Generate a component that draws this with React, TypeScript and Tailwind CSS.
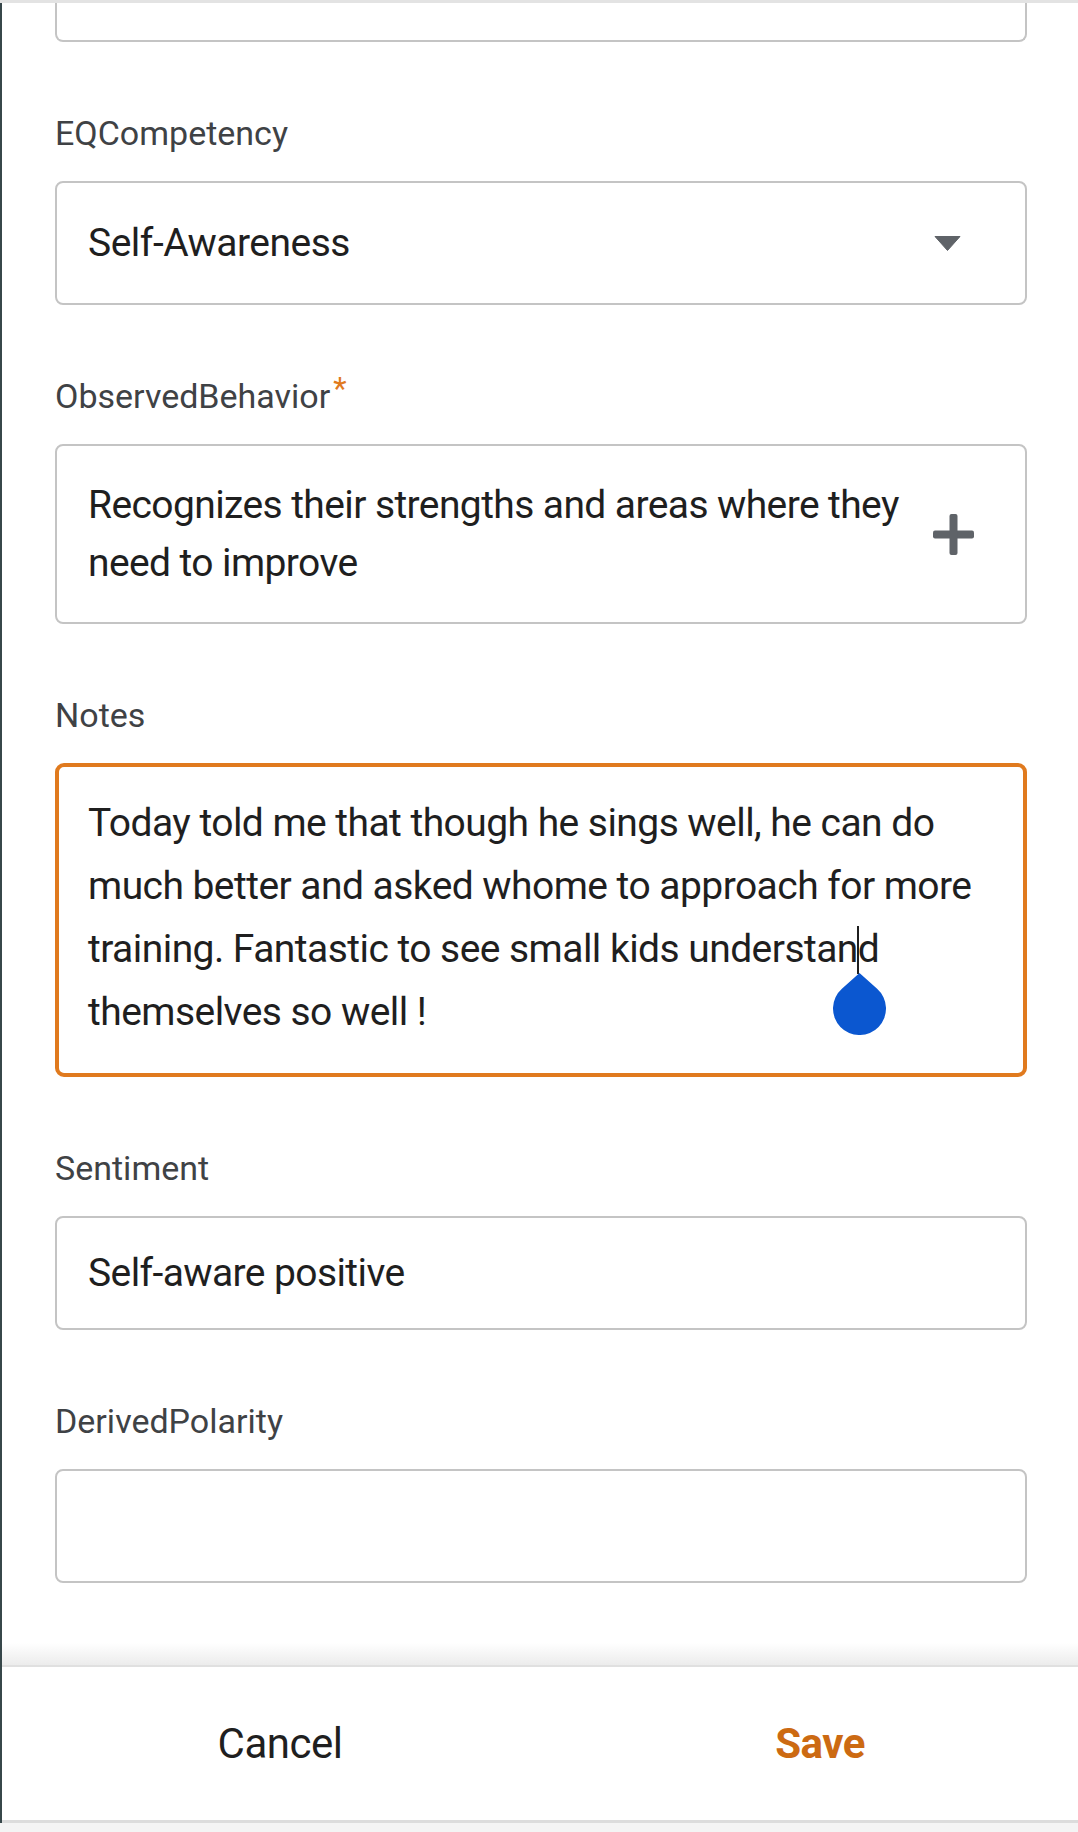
import React from "react";

function Label({ children, required }: { children: React.ReactNode; required?: boolean }) {
  return (
    <div className="mt-[71px] h-[40px] text-[34px] leading-[40px] text-[#3f4245] whitespace-nowrap flex items-start">
      <span>{children}</span>
      {required && (
        <span className="text-[#e07a1e] text-[31px] leading-[30px] ml-[3px] mt-[-2px]">*</span>
      )}
    </div>
  );
}

export default function App() {
  return (
    <div className="w-[1078px] h-[1832px] bg-white flex flex-col overflow-hidden font-['Roboto','Noto_Sans',sans-serif]">
      <div className="h-[3px] bg-[#e3e3e3] shrink-0" />
      <div className="flex-1 flex flex-col border-l-2 border-[#37474a] min-h-0">
        <div className="pl-[53px] pr-[51px] flex flex-col">
          {/* cut-off top box */}
          <div className="h-[39px] border-2 border-t-0 border-[#c4c4c4] rounded-b-[8px]" />

          <Label>EQCompetency</Label>
          <div className="mt-[28px] h-[124px] border-2 border-[#c4c4c4] rounded-[8px] flex items-center pl-[31px] pr-[64px]">
            <span className="flex-1 text-[39px] tracking-[-0.5px] text-[#1f1f1f]">Self-Awareness</span>
            <svg width="27" height="15" viewBox="0 0 27 15">
              <path d="M1 0.5 H26 L13.5 14.5 Z" fill="#5f6368" stroke="#5f6368" strokeWidth="1" strokeLinejoin="round" />
            </svg>
          </div>

          <Label required>ObservedBehavior</Label>
          <div className="mt-[28px] h-[180px] border-2 border-[#c4c4c4] rounded-[8px] flex items-center pl-[31px] pr-[51px]">
            <div className="flex-1 text-[39px] tracking-[-0.6px] leading-[58px] text-[#1f1f1f] pr-[20px]">
              Recognizes their strengths and areas where they need to improve
            </div>
            <svg width="41" height="41" viewBox="0 0 41 41">
              <rect x="0" y="16.5" width="41" height="8" rx="2" fill="#5f6368" />
              <rect x="16.5" y="0" width="8" height="41" rx="2" fill="#5f6368" />
            </svg>
          </div>

          <Label>Notes</Label>
          <div className="mt-[28px] h-[314px] border-[4px] border-[#e07a1e] rounded-[9px] pl-[29px] pr-[30px] pt-[25px]">
            <div className="text-[39px] tracking-[-0.55px] leading-[63px] text-[#1f1f1f]">
              Today told me that though he sings well, he can do much better and asked whome to approach for more training. Fantastic to see small kids{" "}
              <span className="relative">
                understan
                <span className="absolute right-[-1px] top-0 w-[2px] h-[48px] bg-[#1f1f1f]" />
                <svg className="absolute top-[47px] right-[-28px]" width="53" height="62" viewBox="0 0 53 62">
                  <path d="M26.5 0 L44.1 15.7 A26.5 26.5 0 1 1 8.9 15.7 Z" fill="#0b57d0" />
                </svg>
              </span>
              d themselves so well !
            </div>
          </div>

          <Label>Sentiment</Label>
          <div className="mt-[28px] h-[114px] border-2 border-[#c4c4c4] rounded-[8px] flex items-center pl-[31px]">
            <span className="text-[39px] tracking-[-0.6px] text-[#1f1f1f]">Self-aware positive</span>
          </div>

          <Label>DerivedPolarity</Label>
          <div className="mt-[28px] h-[114px] border-2 border-[#c4c4c4] rounded-[8px]" />
        </div>

        <div className="mt-auto flex flex-col shrink-0">
          <div className="h-[22px] bg-linear-to-b from-[#ffffff] to-[#ececec]" />
          <div className="h-[2px] bg-[#e0e0e0]" />
          <div className="h-[153px] bg-white flex items-center pl-[8px]">
            <div className="w-[540px] shrink-0 flex justify-center text-[42px] tracking-[-0.5px] text-[#1f1f1f]">Cancel</div>
            <div className="w-[540px] shrink-0 flex justify-center text-[42px] tracking-[-0.5px] font-bold text-[#cc6a12]">Save</div>
          </div>
          <div className="h-[3px] bg-[#dcdcdc]" />
        </div>
      </div>
      <div className="h-[9px] bg-[#f4f4f4] shrink-0" />
    </div>
  );
}
